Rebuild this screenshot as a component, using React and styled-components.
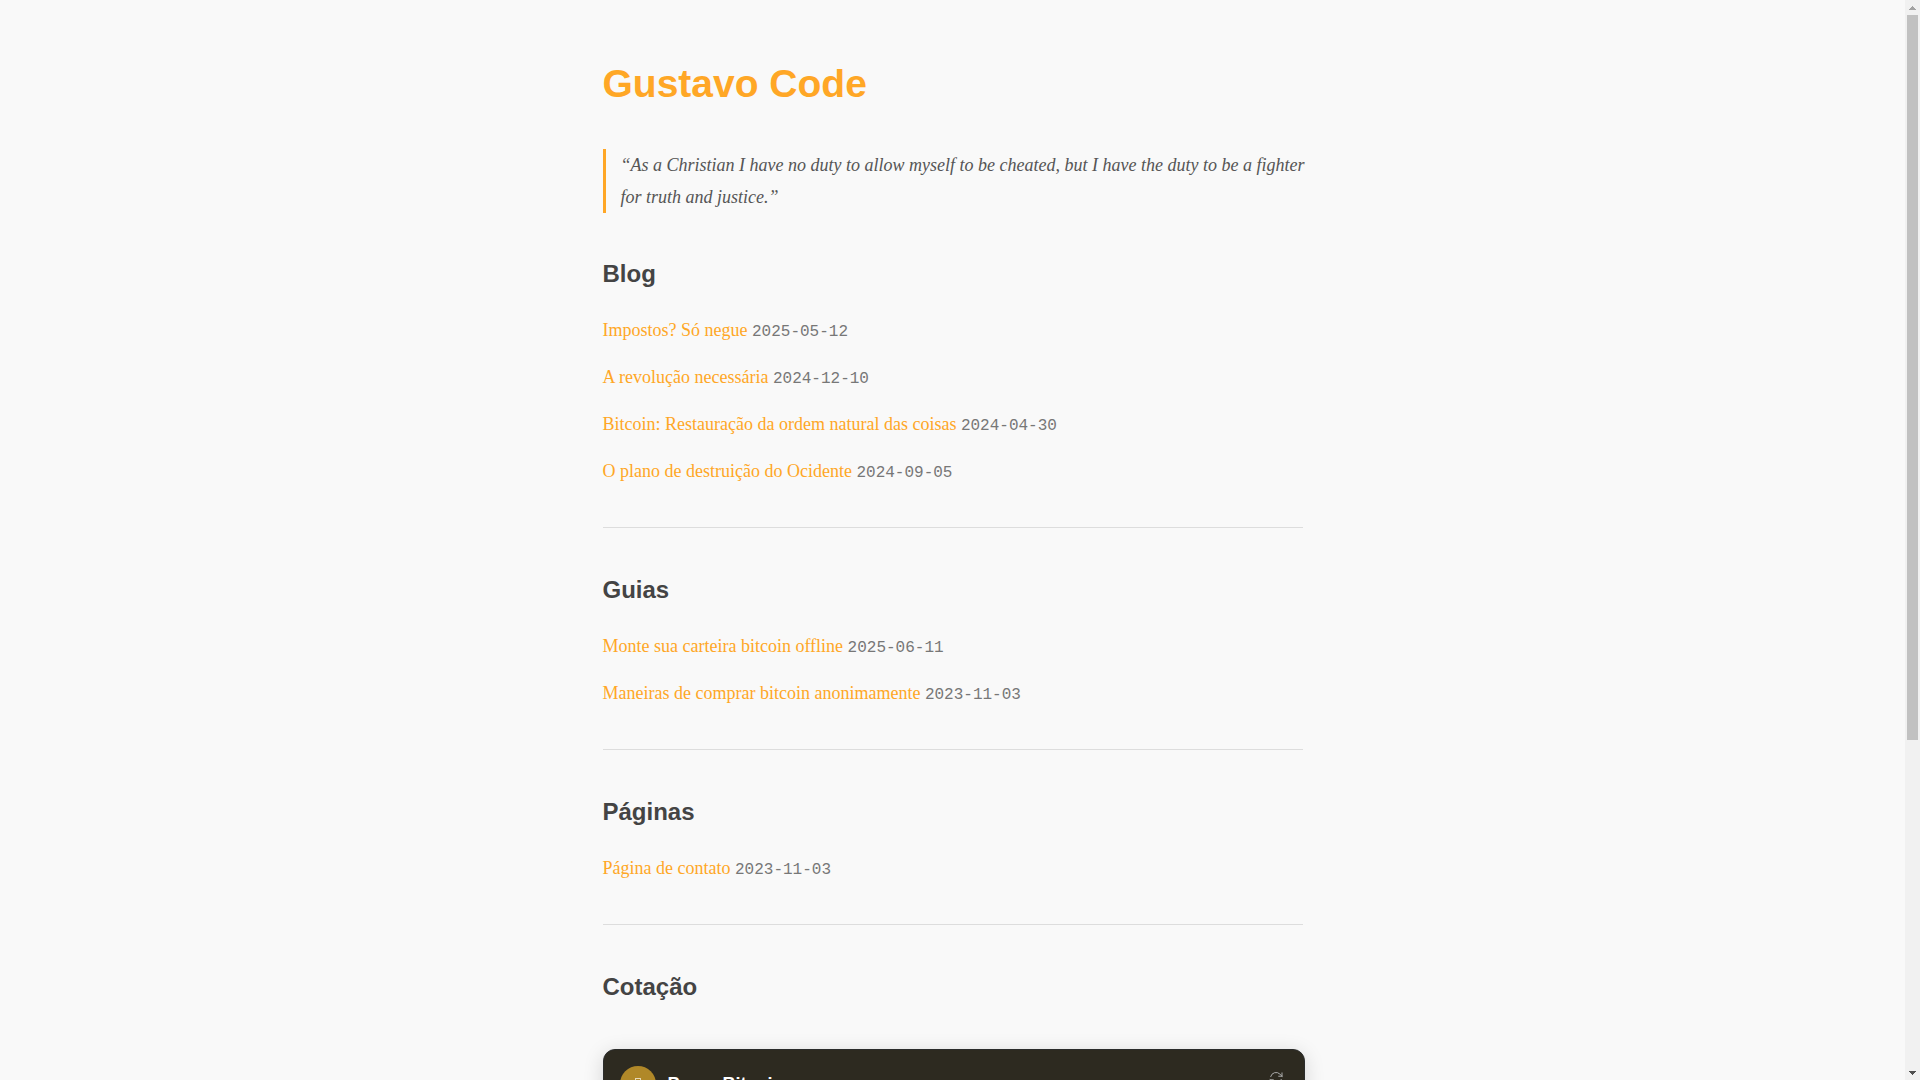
import React from 'react';
import styled, { createGlobalStyle } from 'styled-components';

const GlobalStyle = createGlobalStyle`
  * {
    box-sizing: border-box;
  }

  body {
    margin: 0;
    background: #f9f9f9;
  }
`;

const serif = '"Liberation Serif", "Times New Roman", serif';
const sans = '"Liberation Sans", Arial, sans-serif';
const mono = '"Liberation Mono", "Courier New", monospace';

const Window = styled.div`
  display: flex;
  height: 100vh;
`;

const Content = styled.div`
  flex: 1;
  overflow-y: auto;
  scrollbar-width: none;
  background: #f9f9f9;
  color: #444;
  font-family: ${serif};
  font-size: 18px;
  line-height: 32px;
`;

const ScrollRail = styled.div`
  display: flex;
  flex-direction: column;
  width: 15px;
  background: #f1f1f1;
`;

const ScrollArrow = styled.button`
  display: flex;
  align-items: center;
  justify-content: center;
  width: 15px;
  height: 15px;
  padding: 0;
  border: 0;
  background: transparent;
  color: ${({ $disabled }) => ($disabled ? '#a3a3a3' : '#505050')};
`;

const ScrollTrack = styled.div`
  flex: 1;
  padding: 0 2px;
`;

const ScrollThumb = styled.div`
  height: 69%;
  background: #c1c1c1;
`;

const Page = styled.main`
  max-width: 740px;
  margin: 0 auto;
  padding: 60px 20px 80px;
`;

const Title = styled.h1`
  margin: 0 0 41px;
  color: #ffa726;
  font-family: ${sans};
  font-size: 39px;
  line-height: 48px;
`;

const Quote = styled.blockquote`
  margin: 0 -4px 43px 0;
  padding-left: 15px;
  border-left: 3px solid #ffa726;
  color: #555;
  font-style: italic;
`;

const Heading = styled.h2`
  margin: 0 0 22px;
  font-family: ${sans};
  font-size: 24px;
  line-height: 36px;
`;

const PostList = styled.ul`
  display: flex;
  flex-direction: column;
  gap: 15px;
  margin: 0;
  padding: 0;
  list-style: none;
`;

const PostLink = styled.a`
  color: #ffa726;
  text-decoration: none;

  &:hover {
    text-decoration: underline;
  }
`;

const PostDate = styled.time`
  color: #777;
  font-family: ${mono};
  font-size: 16px;
  line-height: 16px;
`;

const Divider = styled.hr`
  height: 1px;
  margin: 40px 0 44px;
  border: 0;
  background: #ddd;
`;

const Card = styled.section`
  min-height: 400px;
  margin: 44px -2px 0 0;
  padding: 16px;
  border: 1px solid #2b2c2b;
  border-radius: 12px;
  background: #2d2a20;
  color: #fff;
  font-family: ${sans};
  box-shadow: 0 4px 20px rgba(0, 0, 0, 0.15);
`;

const CardHeader = styled.header`
  display: flex;
  align-items: center;
  gap: 12px;
`;

const Coin = styled.span`
  display: flex;
  align-items: center;
  justify-content: center;
  width: 36px;
  height: 36px;
  border-radius: 50%;
  background: #b08828;
`;

const CoinMark = styled.span`
  width: 6px;
  height: 12px;
  border: 1px solid #e6d9b8;
`;

const CardTitle = styled.h3`
  flex: 1;
  margin: 0;
  font-size: 18px;
  line-height: 36px;
`;

const RefreshButton = styled.button`
  display: flex;
  align-self: flex-start;
  padding: 4px;
  border: 0;
  background: transparent;
  color: #aaa;
  cursor: pointer;
`;

const sections = [
  {
    title: 'Blog',
    posts: [
      { title: 'Impostos? Só negue', date: '2025-05-12' },
      { title: 'A revolução necessária', date: '2024-12-10' },
      { title: 'Bitcoin: Restauração da ordem natural das coisas', date: '2024-04-30' },
      { title: 'O plano de destruição do Ocidente', date: '2024-09-05' },
    ],
  },
  {
    title: 'Guias',
    posts: [
      { title: 'Monte sua carteira bitcoin offline', date: '2025-06-11' },
      { title: 'Maneiras de comprar bitcoin anonimamente', date: '2023-11-03' },
    ],
  },
  {
    title: 'Páginas',
    posts: [{ title: 'Página de contato', date: '2023-11-03' }],
  },
];

const RefreshIcon = () => (
  <svg width="16" height="16" viewBox="0 0 24 24" fill="none" stroke="currentColor" strokeWidth="1.5">
    <path
      strokeLinecap="round"
      strokeLinejoin="round"
      d="M16.023 9.348h4.992M2.985 19.644v-4.992h4.992m-4.992 0 3.181 3.183a8.25 8.25 0 0 0 13.803-3.7M4.031 9.865a8.25 8.25 0 0 1 13.803-3.7l3.181 3.182m0-4.991v4.99"
    />
  </svg>
);

const Scrollbar = () => (
  <ScrollRail>
    <ScrollArrow $disabled aria-label="Rolar para cima">
      <svg width="7" height="4" viewBox="0 0 7 4" fill="currentColor" shapeRendering="crispEdges">
        <path d="M3 0h1v1h1v1h1v1h1v1H0V3h1V2h1V1h1z" />
      </svg>
    </ScrollArrow>
    <ScrollTrack>
      <ScrollThumb />
    </ScrollTrack>
    <ScrollArrow aria-label="Rolar para baixo">
      <svg width="7" height="4" viewBox="0 0 7 4" fill="currentColor" shapeRendering="crispEdges">
        <path d="M0 0h7v1H6v1H5v1H4v1H3V3H2V2H1V1H0z" />
      </svg>
    </ScrollArrow>
  </ScrollRail>
);

const App = () => {
  return (
    <>
      <GlobalStyle />
      <Window>
        <Content>
          <Page>
            <Title>Gustavo Code</Title>
            <Quote>
              “As a Christian I have no duty to allow myself to be cheated, but I have the duty to be
              a fighter for truth and justice.”
            </Quote>
            {sections.map((section) => (
              <React.Fragment key={section.title}>
                <Heading>{section.title}</Heading>
                <PostList>
                  {section.posts.map((post) => (
                    <li key={post.title}>
                      <PostLink href="#">{post.title}</PostLink>{' '}
                      <PostDate dateTime={post.date}>{post.date}</PostDate>
                    </li>
                  ))}
                </PostList>
                <Divider />
              </React.Fragment>
            ))}
            <Heading>Cotação</Heading>
            <Card>
              <CardHeader>
                <Coin>
                  <CoinMark />
                </Coin>
                <CardTitle>Preço Bitcoin</CardTitle>
                <RefreshButton aria-label="Atualizar">
                  <RefreshIcon />
                </RefreshButton>
              </CardHeader>
            </Card>
          </Page>
        </Content>
        <Scrollbar />
      </Window>
    </>
  );
};

export default App;
